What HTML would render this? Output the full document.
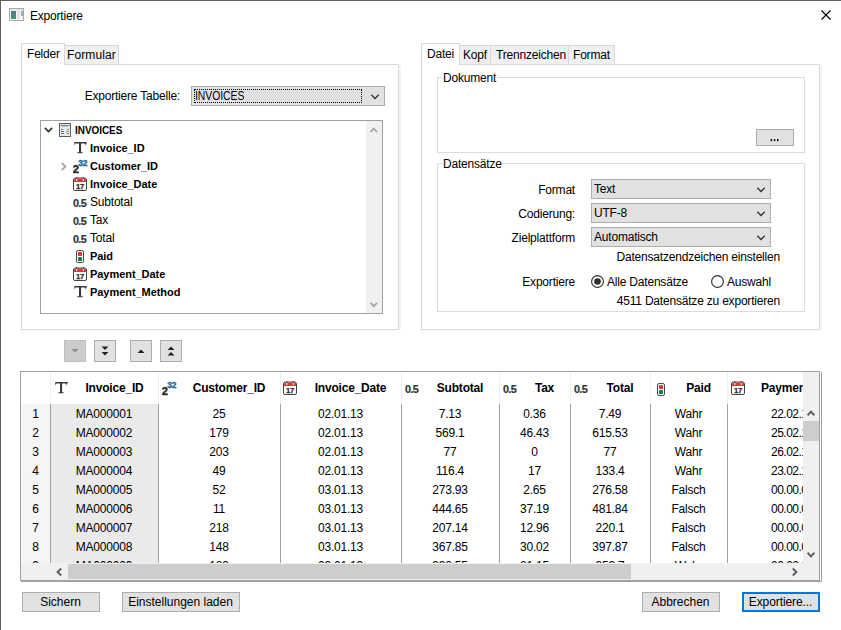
<!DOCTYPE html><html><head><meta charset="utf-8"><style>
html,body{margin:0;padding:0;}
body{width:841px;height:630px;overflow:hidden;position:relative;background:#fff;font-family:"Liberation Sans",sans-serif;font-size:12px;letter-spacing:-0.2px;color:#000;}
.t{position:absolute;line-height:14px;white-space:nowrap;}
.r{position:absolute;}
</style></head><body>
<div class="r" style="left:0px;top:0px;width:841px;height:1px;box-sizing:border-box;background:#5f5f5f;"></div>
<div class="r" style="left:0px;top:0px;width:1px;height:630px;box-sizing:border-box;background:#5f5f5f;"></div>
<svg class="r" style="left:9px;top:8px;" width="15" height="13" viewBox="0 0 15 13"><defs><linearGradient id="wg" x1="0" y1="0" x2="0" y2="1"><stop offset="0" stop-color="#55758c"/><stop offset="1" stop-color="#3f9a72"/></linearGradient></defs><rect x="0.5" y="0.5" width="14" height="12" fill="#f7f7f7" stroke="#a9a9a9"/><rect x="1" y="1" width="13" height="1.5" fill="#e2e2e2"/><rect x="2" y="3" width="5" height="8" fill="url(#wg)"/><rect x="8" y="3" width="3" height="8" fill="#e3e3e3"/><rect x="12" y="3" width="2" height="5" fill="#9fb5ac"/></svg>
<div class="t" style="left:30px;top:9px;">Exportiere</div>
<svg class="r" style="left:820px;top:9px;" width="12" height="12" viewBox="0 0 12 12"><path d="M1.5 1.5 L10.5 10.5 M10.5 1.5 L1.5 10.5" stroke="#000" stroke-width="1.1" fill="none"/></svg>
<div class="r" style="left:399px;top:65px;width:2px;height:265px;box-sizing:border-box;background:#f3f3f3;"></div>
<div class="r" style="left:21px;top:64px;width:378px;height:266px;box-sizing:border-box;border:1px solid #d9d9d9;"></div>
<div class="r" style="left:64px;top:45px;width:55px;height:20px;box-sizing:border-box;background:#f0f0f0;border:1px solid #d9d9d9;"></div>
<div class="r" style="left:21px;top:43px;width:44px;height:22px;box-sizing:border-box;background:#fff;border:1px solid #d9d9d9;border-bottom:none;"></div>
<div class="t" style="left:27px;top:47px;">Felder</div>
<div class="t" style="left:67px;top:48px;letter-spacing:0.1px;">Formular</div>
<div class="t" style="left:-20px;top:89px;width:200px;text-align:right;">Exportiere Tabelle:</div>
<div class="r" style="left:191px;top:86px;width:194px;height:20px;box-sizing:border-box;background:#e1e1e1;border:1px solid #adadad;"></div>
<div class="r" style="left:194px;top:89px;width:168px;height:14px;box-sizing:border-box;border:1px dotted #000;"></div>
<div class="t" style="left:195px;top:89px;letter-spacing:0;transform:scaleX(0.86);transform-origin:0 0;">INVOICES</div>
<svg class="r" style="left:370px;top:94px;" width="10" height="6" viewBox="0 0 10 6"><path d="M1.3 0.8 L5 4.5 L8.7 0.8" stroke="#333" stroke-width="1.3" fill="none"/></svg>
<div class="r" style="left:40px;top:120px;width:343px;height:194px;box-sizing:border-box;background:#fff;border:1px solid #a0a0a0;"></div>
<div class="r" style="left:366px;top:121px;width:16px;height:192px;box-sizing:border-box;background:#f0f0f0;"></div>
<svg class="r" style="left:369px;top:126px;" width="10" height="8" viewBox="0 0 10 8"><path d="M1.6 6 L4.8 2.6 L8 6" stroke="#a3a3a3" stroke-width="1.8" fill="none"/></svg>
<svg class="r" style="left:369px;top:301px;" width="10" height="8" viewBox="0 0 10 8"><path d="M1.6 1.8 L4.8 5.2 L8 1.8" stroke="#a3a3a3" stroke-width="1.8" fill="none"/></svg>
<svg class="r" style="left:44px;top:127px;" width="10" height="7" viewBox="0 0 10 7"><path d="M0.9 0.9 L4.5 4.6 L8.1 0.9" stroke="#333" stroke-width="1.7" fill="none"/></svg>
<svg class="r" style="left:59px;top:123px;" width="12" height="14" viewBox="0 0 12 14"><rect x="0.5" y="0.5" width="11" height="13" fill="#e4eaf0" stroke="#5e5e5e"/><path d="M1.8 3.4 L2.9 1.9 L4 3.4 L5.1 1.9 L6.2 3.4 L7.3 1.9 L8.4 3.4 L9.5 1.9 L10.3 3" stroke="#505a66" stroke-width="0.8" fill="none"/><rect x="2" y="6" width="2" height="1" fill="#667"/><rect x="8" y="6" width="2" height="1" fill="#6a8a6a"/><rect x="2" y="8" width="3" height="1" fill="#667"/><rect x="7" y="8" width="3" height="1" fill="#c98070"/><rect x="2" y="10" width="3" height="1" fill="#667"/><rect x="8" y="10" width="2" height="1" fill="#4f8f4f"/></svg>
<div class="t" style="left:75px;top:123px;font-weight:bold;font-size:11px;letter-spacing:0;transform:scaleX(0.9);transform-origin:0 0;">INVOICES</div>
<svg class="r" style="left:74px;top:142px;" width="13" height="12" viewBox="0 0 13 12"><path d="M0.3 0 H12.7 V1.6 H12.2 Q12 2.6 11.9 3.2 H11.6 Q11.4 1.7 10.6 1.6 H7.1 V9.9 Q7.2 10.3 8.8 10.4 V11.2 H3.2 V10.4 Q4.9 10.3 5 9.9 V1.6 H1.5 Q0.7 1.7 0.5 3.2 H0.2 Z" fill="#3c3c3c"/></svg>
<div class="t" style="left:90px;top:141px;font-weight:bold;font-size:11px;letter-spacing:-0.05px;">Invoice_ID</div>
<svg class="r" style="left:73px;top:159px;" width="16" height="15" viewBox="0 0 16 15"><text x="-0.2" y="14" font-family="Liberation Sans" font-weight="bold" font-size="11.2" fill="#2b2b2b" stroke="#2b2b2b" stroke-width="0.45">2</text><text x="5.3" y="7" font-family="Liberation Sans" font-weight="bold" font-size="8.4" fill="#1a6a98" stroke="#1a6a98" stroke-width="0.35" letter-spacing="-0.2">32</text></svg>
<div class="t" style="left:90px;top:159px;font-weight:bold;font-size:11px;letter-spacing:-0.05px;">Customer_ID</div>
<svg class="r" style="left:73px;top:177px;" width="14" height="14" viewBox="0 0 14 14"><path d="M0.5 3 Q0.5 1 2.5 1 H11.5 Q13.5 1 13.5 3 V12 Q13.5 13.5 12 13.5 H2 Q0.5 13.5 0.5 12 Z" fill="#fff" stroke="#444"/><path d="M1 3 Q1 1.5 2.5 1.5 H11.5 Q13 1.5 13 3 V5 H1 Z" fill="#d9383b"/><rect x="3" y="0" width="1.3" height="2" fill="#555"/><rect x="9.7" y="0" width="1.3" height="2" fill="#555"/><rect x="3" y="2" width="1.3" height="2" fill="#f6d6d6"/><rect x="9.7" y="2" width="1.3" height="2" fill="#f6d6d6"/><text x="7" y="12.2" text-anchor="middle" font-family="Liberation Sans" font-weight="bold" font-size="7.6" fill="#2b2b2b" stroke="#2b2b2b" stroke-width="0.25" letter-spacing="-0.3">17</text></svg>
<div class="t" style="left:90px;top:177px;font-weight:bold;font-size:11px;letter-spacing:-0.05px;">Invoice_Date</div>
<svg class="r" style="left:73px;top:199px;" width="16" height="10" viewBox="0 0 16 10"><text x="-0.1" y="8" font-family="Liberation Sans" font-weight="bold" font-size="10.8" fill="#333" stroke="#333" stroke-width="0.2" letter-spacing="-0.6">0.5</text></svg>
<div class="t" style="left:90px;top:195px;">Subtotal</div>
<svg class="r" style="left:73px;top:217px;" width="16" height="10" viewBox="0 0 16 10"><text x="-0.1" y="8" font-family="Liberation Sans" font-weight="bold" font-size="10.8" fill="#333" stroke="#333" stroke-width="0.2" letter-spacing="-0.6">0.5</text></svg>
<div class="t" style="left:90px;top:213px;">Tax</div>
<svg class="r" style="left:73px;top:235px;" width="16" height="10" viewBox="0 0 16 10"><text x="-0.1" y="8" font-family="Liberation Sans" font-weight="bold" font-size="10.8" fill="#333" stroke="#333" stroke-width="0.2" letter-spacing="-0.6">0.5</text></svg>
<div class="t" style="left:90px;top:231px;">Total</div>
<svg class="r" style="left:76px;top:250px;" width="8" height="13" viewBox="0 0 8 13"><rect x="0.5" y="0.5" width="7" height="12" rx="1.6" fill="#fff" stroke="#444"/><rect x="2" y="2" width="4" height="4" rx="0.6" fill="#e5343a"/><rect x="2" y="7" width="4" height="4" rx="0.6" fill="#13803a"/></svg>
<div class="t" style="left:90px;top:249px;font-weight:bold;font-size:11px;letter-spacing:-0.05px;">Paid</div>
<svg class="r" style="left:73px;top:267px;" width="14" height="14" viewBox="0 0 14 14"><path d="M0.5 3 Q0.5 1 2.5 1 H11.5 Q13.5 1 13.5 3 V12 Q13.5 13.5 12 13.5 H2 Q0.5 13.5 0.5 12 Z" fill="#fff" stroke="#444"/><path d="M1 3 Q1 1.5 2.5 1.5 H11.5 Q13 1.5 13 3 V5 H1 Z" fill="#d9383b"/><rect x="3" y="0" width="1.3" height="2" fill="#555"/><rect x="9.7" y="0" width="1.3" height="2" fill="#555"/><rect x="3" y="2" width="1.3" height="2" fill="#f6d6d6"/><rect x="9.7" y="2" width="1.3" height="2" fill="#f6d6d6"/><text x="7" y="12.2" text-anchor="middle" font-family="Liberation Sans" font-weight="bold" font-size="7.6" fill="#2b2b2b" stroke="#2b2b2b" stroke-width="0.25" letter-spacing="-0.3">17</text></svg>
<div class="t" style="left:90px;top:267px;font-weight:bold;font-size:11px;letter-spacing:-0.05px;">Payment_Date</div>
<svg class="r" style="left:74px;top:286px;" width="13" height="12" viewBox="0 0 13 12"><path d="M0.3 0 H12.7 V1.6 H12.2 Q12 2.6 11.9 3.2 H11.6 Q11.4 1.7 10.6 1.6 H7.1 V9.9 Q7.2 10.3 8.8 10.4 V11.2 H3.2 V10.4 Q4.9 10.3 5 9.9 V1.6 H1.5 Q0.7 1.7 0.5 3.2 H0.2 Z" fill="#3c3c3c"/></svg>
<div class="t" style="left:90px;top:285px;font-weight:bold;font-size:11px;letter-spacing:-0.05px;">Payment_Method</div>
<svg class="r" style="left:60px;top:162px;" width="8" height="10" viewBox="0 0 8 10"><path d="M1.8 1 L5.4 4.6 L1.8 8.2" stroke="#a6a6a6" stroke-width="1.8" fill="none"/></svg>
<div class="r" style="left:820px;top:65px;width:2px;height:265px;box-sizing:border-box;background:#f3f3f3;"></div>
<div class="r" style="left:421px;top:64px;width:399px;height:266px;box-sizing:border-box;border:1px solid #d9d9d9;"></div>
<div class="r" style="left:459px;top:45px;width:32px;height:20px;box-sizing:border-box;background:#f0f0f0;border:1px solid #d9d9d9;"></div>
<div class="r" style="left:490px;top:45px;width:79px;height:20px;box-sizing:border-box;background:#f0f0f0;border:1px solid #d9d9d9;"></div>
<div class="r" style="left:568px;top:45px;width:47px;height:20px;box-sizing:border-box;background:#f0f0f0;border:1px solid #d9d9d9;"></div>
<div class="r" style="left:421px;top:43px;width:39px;height:22px;box-sizing:border-box;background:#fff;border:1px solid #d9d9d9;border-bottom:none;"></div>
<div class="t" style="left:427px;top:47px;">Datei</div>
<div class="t" style="left:463px;top:48px;">Kopf</div>
<div class="t" style="left:496px;top:48px;">Trennzeichen</div>
<div class="t" style="left:573px;top:48px;">Format</div>
<div class="r" style="left:437px;top:77px;width:368px;height:76px;box-sizing:border-box;border:1px solid #dcdcdc;"></div>
<div class="r" style="left:442px;top:70px;width:55px;height:13px;box-sizing:border-box;background:#fff;"></div>
<div class="t" style="left:443px;top:71px;">Dokument</div>
<div class="r" style="left:756px;top:129px;width:38px;height:17px;box-sizing:border-box;background:#e1e1e1;border:1px solid #adadad;"></div>
<svg class="r" style="left:770px;top:138px;" width="10" height="5" viewBox="0 0 10 5"><rect x="0.6" y="1" width="1.5" height="2.2" fill="#111"/><rect x="3.8" y="1" width="1.5" height="2.2" fill="#111"/><rect x="7" y="1" width="1.5" height="2.2" fill="#111"/></svg>
<div class="r" style="left:437px;top:163px;width:368px;height:149px;box-sizing:border-box;border:1px solid #dcdcdc;"></div>
<div class="r" style="left:442px;top:156px;width:58px;height:13px;box-sizing:border-box;background:#fff;"></div>
<div class="t" style="left:443px;top:157px;">Datensätze</div>
<div class="t" style="left:375px;top:183px;width:200px;text-align:right;">Format</div>
<div class="r" style="left:591px;top:179px;width:180px;height:20px;box-sizing:border-box;background:#e1e1e1;border:1px solid #adadad;"></div>
<div class="t" style="left:594px;top:182px;">Text</div>
<svg class="r" style="left:756px;top:187px;" width="10" height="6" viewBox="0 0 10 6"><path d="M1.3 0.8 L5 4.5 L8.7 0.8" stroke="#333" stroke-width="1.3" fill="none"/></svg>
<div class="t" style="left:375px;top:207px;width:200px;text-align:right;">Codierung:</div>
<div class="r" style="left:591px;top:203px;width:180px;height:20px;box-sizing:border-box;background:#e1e1e1;border:1px solid #adadad;"></div>
<div class="t" style="left:594px;top:206px;">UTF-8</div>
<svg class="r" style="left:756px;top:211px;" width="10" height="6" viewBox="0 0 10 6"><path d="M1.3 0.8 L5 4.5 L8.7 0.8" stroke="#333" stroke-width="1.3" fill="none"/></svg>
<div class="t" style="left:375px;top:231px;width:200px;text-align:right;">Zielplattform</div>
<div class="r" style="left:591px;top:227px;width:180px;height:20px;box-sizing:border-box;background:#e1e1e1;border:1px solid #adadad;"></div>
<div class="t" style="left:594px;top:230px;">Automatisch</div>
<svg class="r" style="left:756px;top:235px;" width="10" height="6" viewBox="0 0 10 6"><path d="M1.3 0.8 L5 4.5 L8.7 0.8" stroke="#333" stroke-width="1.3" fill="none"/></svg>
<div class="t" style="left:580px;top:250px;width:200px;text-align:right;">Datensatzendzeichen einstellen</div>
<div class="t" style="left:375px;top:275px;width:200px;text-align:right;">Exportiere</div>
<svg class="r" style="left:590px;top:274px;" width="15" height="15" viewBox="0 0 15 15"><circle cx="7.5" cy="7.5" r="5.9" fill="#fff" stroke="#333" stroke-width="1.2"/><circle cx="7.5" cy="7.5" r="3.3" fill="#2f2f2f"/></svg>
<div class="t" style="left:607px;top:275px;">Alle Datensätze</div>
<svg class="r" style="left:710px;top:274px;" width="15" height="15" viewBox="0 0 15 15"><circle cx="7.5" cy="7.5" r="5.9" fill="#fff" stroke="#333" stroke-width="1.2"/></svg>
<div class="t" style="left:727px;top:275px;">Auswahl</div>
<div class="t" style="left:580px;top:294px;width:200px;text-align:right;">4511 Datensätze zu exportieren</div>
<div class="r" style="left:64px;top:340px;width:22px;height:22px;box-sizing:border-box;background:#cccccc;border:1px solid #bfbfbf;"></div>
<div class="r" style="left:94px;top:340px;width:22px;height:22px;box-sizing:border-box;background:#e1e1e1;border:1px solid #adadad;"></div>
<div class="r" style="left:130px;top:340px;width:22px;height:22px;box-sizing:border-box;background:#e1e1e1;border:1px solid #adadad;"></div>
<div class="r" style="left:160px;top:340px;width:22px;height:22px;box-sizing:border-box;background:#e1e1e1;border:1px solid #adadad;"></div>
<svg class="r" style="left:60px;top:336px;" width="130" height="30" viewBox="0 0 130 30"><polygon points="11.5,13 18.5,13 15,16.5" fill="#8f8f8f"/><polygon points="41.5,10.5 48.5,10.5 45,14" fill="#222"/><polygon points="41.5,16 48.5,16 45,19.5" fill="#222"/><polygon points="77.5,17 84.5,17 81,13.5" fill="#222"/><polygon points="107.5,14 114.5,14 111,10.5" fill="#222"/><polygon points="107.5,19.5 114.5,19.5 111,16" fill="#222"/></svg>
<div class="r" style="left:20px;top:371px;width:800px;height:210px;box-sizing:border-box;background:#fff;border:1px solid #a0a0a0;"></div>
<div class="r" style="left:821px;top:372px;width:1px;height:210px;box-sizing:border-box;background:#a0a0a0;"></div>
<div class="r" style="left:21px;top:581px;width:801px;height:1px;box-sizing:border-box;background:#a0a0a0;"></div>
<div class="r" style="left:21px;top:404px;width:29px;height:159px;box-sizing:border-box;background:#f5f5f5;"></div>
<div class="r" style="left:51px;top:404px;width:107px;height:159px;box-sizing:border-box;background:#eaeaea;"></div>
<div class="r" style="left:50px;top:372px;width:1px;height:32px;box-sizing:border-box;background:#efefef;"></div>
<div class="r" style="left:50px;top:404px;width:1px;height:159px;box-sizing:border-box;background:#a0a0a0;"></div>
<div class="r" style="left:158px;top:372px;width:1px;height:32px;box-sizing:border-box;background:#efefef;"></div>
<div class="r" style="left:158px;top:404px;width:1px;height:159px;box-sizing:border-box;background:#a0a0a0;"></div>
<div class="r" style="left:280px;top:372px;width:1px;height:32px;box-sizing:border-box;background:#efefef;"></div>
<div class="r" style="left:280px;top:404px;width:1px;height:159px;box-sizing:border-box;background:#a0a0a0;"></div>
<div class="r" style="left:401px;top:372px;width:1px;height:32px;box-sizing:border-box;background:#efefef;"></div>
<div class="r" style="left:401px;top:404px;width:1px;height:159px;box-sizing:border-box;background:#a0a0a0;"></div>
<div class="r" style="left:499px;top:372px;width:1px;height:32px;box-sizing:border-box;background:#efefef;"></div>
<div class="r" style="left:499px;top:404px;width:1px;height:159px;box-sizing:border-box;background:#a0a0a0;"></div>
<div class="r" style="left:570px;top:372px;width:1px;height:32px;box-sizing:border-box;background:#efefef;"></div>
<div class="r" style="left:570px;top:404px;width:1px;height:159px;box-sizing:border-box;background:#a0a0a0;"></div>
<div class="r" style="left:650px;top:372px;width:1px;height:32px;box-sizing:border-box;background:#efefef;"></div>
<div class="r" style="left:650px;top:404px;width:1px;height:159px;box-sizing:border-box;background:#a0a0a0;"></div>
<div class="r" style="left:727px;top:372px;width:1px;height:32px;box-sizing:border-box;background:#efefef;"></div>
<div class="r" style="left:727px;top:404px;width:1px;height:159px;box-sizing:border-box;background:#a0a0a0;"></div>
<svg class="r" style="left:55px;top:382px;" width="13" height="12" viewBox="0 0 13 12"><path d="M0.3 0 H12.7 V1.6 H12.2 Q12 2.6 11.9 3.2 H11.6 Q11.4 1.7 10.6 1.6 H7.1 V9.9 Q7.2 10.3 8.8 10.4 V11.2 H3.2 V10.4 Q4.9 10.3 5 9.9 V1.6 H1.5 Q0.7 1.7 0.5 3.2 H0.2 Z" fill="#3c3c3c"/></svg>
<div class="t" style="left:14.5px;top:381px;width:200px;text-align:center;font-weight:bold;">Invoice_ID</div>
<svg class="r" style="left:162px;top:381px;" width="16" height="15" viewBox="0 0 16 15"><text x="-0.2" y="14" font-family="Liberation Sans" font-weight="bold" font-size="11.2" fill="#2b2b2b" stroke="#2b2b2b" stroke-width="0.45">2</text><text x="5.3" y="7" font-family="Liberation Sans" font-weight="bold" font-size="8.4" fill="#1a6a98" stroke="#1a6a98" stroke-width="0.35" letter-spacing="-0.2">32</text></svg>
<div class="t" style="left:129.0px;top:381px;width:200px;text-align:center;font-weight:bold;">Customer_ID</div>
<svg class="r" style="left:283px;top:381px;" width="14" height="14" viewBox="0 0 14 14"><path d="M0.5 3 Q0.5 1 2.5 1 H11.5 Q13.5 1 13.5 3 V12 Q13.5 13.5 12 13.5 H2 Q0.5 13.5 0.5 12 Z" fill="#fff" stroke="#444"/><path d="M1 3 Q1 1.5 2.5 1.5 H11.5 Q13 1.5 13 3 V5 H1 Z" fill="#d9383b"/><rect x="3" y="0" width="1.3" height="2" fill="#555"/><rect x="9.7" y="0" width="1.3" height="2" fill="#555"/><rect x="3" y="2" width="1.3" height="2" fill="#f6d6d6"/><rect x="9.7" y="2" width="1.3" height="2" fill="#f6d6d6"/><text x="7" y="12.2" text-anchor="middle" font-family="Liberation Sans" font-weight="bold" font-size="7.6" fill="#2b2b2b" stroke="#2b2b2b" stroke-width="0.25" letter-spacing="-0.3">17</text></svg>
<div class="t" style="left:250.5px;top:381px;width:200px;text-align:center;font-weight:bold;">Invoice_Date</div>
<svg class="r" style="left:405px;top:385px;" width="16" height="10" viewBox="0 0 16 10"><text x="-0.1" y="8" font-family="Liberation Sans" font-weight="bold" font-size="10.8" fill="#333" stroke="#333" stroke-width="0.2" letter-spacing="-0.6">0.5</text></svg>
<div class="t" style="left:360.0px;top:381px;width:200px;text-align:center;font-weight:bold;">Subtotal</div>
<svg class="r" style="left:503px;top:385px;" width="16" height="10" viewBox="0 0 16 10"><text x="-0.1" y="8" font-family="Liberation Sans" font-weight="bold" font-size="10.8" fill="#333" stroke="#333" stroke-width="0.2" letter-spacing="-0.6">0.5</text></svg>
<div class="t" style="left:444.5px;top:381px;width:200px;text-align:center;font-weight:bold;">Tax</div>
<svg class="r" style="left:574px;top:385px;" width="16" height="10" viewBox="0 0 16 10"><text x="-0.1" y="8" font-family="Liberation Sans" font-weight="bold" font-size="10.8" fill="#333" stroke="#333" stroke-width="0.2" letter-spacing="-0.6">0.5</text></svg>
<div class="t" style="left:520.0px;top:381px;width:200px;text-align:center;font-weight:bold;">Total</div>
<svg class="r" style="left:657px;top:383px;" width="8" height="13" viewBox="0 0 8 13"><rect x="0.5" y="0.5" width="7" height="12" rx="1.6" fill="#fff" stroke="#444"/><rect x="2" y="2" width="4" height="4" rx="0.6" fill="#e5343a"/><rect x="2" y="7" width="4" height="4" rx="0.6" fill="#13803a"/></svg>
<div class="t" style="left:598.5px;top:381px;width:200px;text-align:center;font-weight:bold;">Paid</div>
<svg class="r" style="left:731px;top:381px;" width="14" height="14" viewBox="0 0 14 14"><path d="M0.5 3 Q0.5 1 2.5 1 H11.5 Q13.5 1 13.5 3 V12 Q13.5 13.5 12 13.5 H2 Q0.5 13.5 0.5 12 Z" fill="#fff" stroke="#444"/><path d="M1 3 Q1 1.5 2.5 1.5 H11.5 Q13 1.5 13 3 V5 H1 Z" fill="#d9383b"/><rect x="3" y="0" width="1.3" height="2" fill="#555"/><rect x="9.7" y="0" width="1.3" height="2" fill="#555"/><rect x="3" y="2" width="1.3" height="2" fill="#f6d6d6"/><rect x="9.7" y="2" width="1.3" height="2" fill="#f6d6d6"/><text x="7" y="12.2" text-anchor="middle" font-family="Liberation Sans" font-weight="bold" font-size="7.6" fill="#2b2b2b" stroke="#2b2b2b" stroke-width="0.25" letter-spacing="-0.3">17</text></svg>
<div class="r" style="left:728px;top:372px;width:75px;height:31px;overflow:hidden;"><div class="t" style="left:33px;top:9px;font-weight:bold;">Payment_Date</div></div>
<div class="r" style="left:21px;top:404px;width:782px;height:159px;overflow:hidden;">
<div class="t" style="left:0px;width:29px;top:3px;text-align:center;">1</div>
<div class="t" style="left:29px;width:108px;top:3px;text-align:center;">MA000001</div>
<div class="t" style="left:137px;width:122px;top:3px;text-align:center;">25</div>
<div class="t" style="left:259px;width:121px;top:3px;text-align:center;">02.01.13</div>
<div class="t" style="left:380px;width:98px;top:3px;text-align:center;">7.13</div>
<div class="t" style="left:478px;width:71px;top:3px;text-align:center;">0.36</div>
<div class="t" style="left:549px;width:80px;top:3px;text-align:center;">7.49</div>
<div class="t" style="left:629px;width:77px;top:3px;text-align:center;">Wahr</div>
<div class="t" style="left:750px;top:3px;letter-spacing:-0.5px;">22.02.13</div>
<div class="t" style="left:0px;width:29px;top:22px;text-align:center;">2</div>
<div class="t" style="left:29px;width:108px;top:22px;text-align:center;">MA000002</div>
<div class="t" style="left:137px;width:122px;top:22px;text-align:center;">179</div>
<div class="t" style="left:259px;width:121px;top:22px;text-align:center;">02.01.13</div>
<div class="t" style="left:380px;width:98px;top:22px;text-align:center;">569.1</div>
<div class="t" style="left:478px;width:71px;top:22px;text-align:center;">46.43</div>
<div class="t" style="left:549px;width:80px;top:22px;text-align:center;">615.53</div>
<div class="t" style="left:629px;width:77px;top:22px;text-align:center;">Wahr</div>
<div class="t" style="left:750px;top:22px;letter-spacing:-0.5px;">25.02.13</div>
<div class="t" style="left:0px;width:29px;top:41px;text-align:center;">3</div>
<div class="t" style="left:29px;width:108px;top:41px;text-align:center;">MA000003</div>
<div class="t" style="left:137px;width:122px;top:41px;text-align:center;">203</div>
<div class="t" style="left:259px;width:121px;top:41px;text-align:center;">02.01.13</div>
<div class="t" style="left:380px;width:98px;top:41px;text-align:center;">77</div>
<div class="t" style="left:478px;width:71px;top:41px;text-align:center;">0</div>
<div class="t" style="left:549px;width:80px;top:41px;text-align:center;">77</div>
<div class="t" style="left:629px;width:77px;top:41px;text-align:center;">Wahr</div>
<div class="t" style="left:750px;top:41px;letter-spacing:-0.5px;">26.02.13</div>
<div class="t" style="left:0px;width:29px;top:60px;text-align:center;">4</div>
<div class="t" style="left:29px;width:108px;top:60px;text-align:center;">MA000004</div>
<div class="t" style="left:137px;width:122px;top:60px;text-align:center;">49</div>
<div class="t" style="left:259px;width:121px;top:60px;text-align:center;">02.01.13</div>
<div class="t" style="left:380px;width:98px;top:60px;text-align:center;">116.4</div>
<div class="t" style="left:478px;width:71px;top:60px;text-align:center;">17</div>
<div class="t" style="left:549px;width:80px;top:60px;text-align:center;">133.4</div>
<div class="t" style="left:629px;width:77px;top:60px;text-align:center;">Wahr</div>
<div class="t" style="left:750px;top:60px;letter-spacing:-0.5px;">23.02.13</div>
<div class="t" style="left:0px;width:29px;top:79px;text-align:center;">5</div>
<div class="t" style="left:29px;width:108px;top:79px;text-align:center;">MA000005</div>
<div class="t" style="left:137px;width:122px;top:79px;text-align:center;">52</div>
<div class="t" style="left:259px;width:121px;top:79px;text-align:center;">03.01.13</div>
<div class="t" style="left:380px;width:98px;top:79px;text-align:center;">273.93</div>
<div class="t" style="left:478px;width:71px;top:79px;text-align:center;">2.65</div>
<div class="t" style="left:549px;width:80px;top:79px;text-align:center;">276.58</div>
<div class="t" style="left:629px;width:77px;top:79px;text-align:center;">Falsch</div>
<div class="t" style="left:750px;top:79px;letter-spacing:-0.5px;">00.00.00</div>
<div class="t" style="left:0px;width:29px;top:98px;text-align:center;">6</div>
<div class="t" style="left:29px;width:108px;top:98px;text-align:center;">MA000006</div>
<div class="t" style="left:137px;width:122px;top:98px;text-align:center;">11</div>
<div class="t" style="left:259px;width:121px;top:98px;text-align:center;">03.01.13</div>
<div class="t" style="left:380px;width:98px;top:98px;text-align:center;">444.65</div>
<div class="t" style="left:478px;width:71px;top:98px;text-align:center;">37.19</div>
<div class="t" style="left:549px;width:80px;top:98px;text-align:center;">481.84</div>
<div class="t" style="left:629px;width:77px;top:98px;text-align:center;">Falsch</div>
<div class="t" style="left:750px;top:98px;letter-spacing:-0.5px;">00.00.00</div>
<div class="t" style="left:0px;width:29px;top:117px;text-align:center;">7</div>
<div class="t" style="left:29px;width:108px;top:117px;text-align:center;">MA000007</div>
<div class="t" style="left:137px;width:122px;top:117px;text-align:center;">218</div>
<div class="t" style="left:259px;width:121px;top:117px;text-align:center;">03.01.13</div>
<div class="t" style="left:380px;width:98px;top:117px;text-align:center;">207.14</div>
<div class="t" style="left:478px;width:71px;top:117px;text-align:center;">12.96</div>
<div class="t" style="left:549px;width:80px;top:117px;text-align:center;">220.1</div>
<div class="t" style="left:629px;width:77px;top:117px;text-align:center;">Falsch</div>
<div class="t" style="left:750px;top:117px;letter-spacing:-0.5px;">00.00.00</div>
<div class="t" style="left:0px;width:29px;top:136px;text-align:center;">8</div>
<div class="t" style="left:29px;width:108px;top:136px;text-align:center;">MA000008</div>
<div class="t" style="left:137px;width:122px;top:136px;text-align:center;">148</div>
<div class="t" style="left:259px;width:121px;top:136px;text-align:center;">03.01.13</div>
<div class="t" style="left:380px;width:98px;top:136px;text-align:center;">367.85</div>
<div class="t" style="left:478px;width:71px;top:136px;text-align:center;">30.02</div>
<div class="t" style="left:549px;width:80px;top:136px;text-align:center;">397.87</div>
<div class="t" style="left:629px;width:77px;top:136px;text-align:center;">Falsch</div>
<div class="t" style="left:750px;top:136px;letter-spacing:-0.5px;">00.00.00</div>
<div class="t" style="left:0px;width:29px;top:155px;text-align:center;">9</div>
<div class="t" style="left:29px;width:108px;top:155px;text-align:center;">MA000009</div>
<div class="t" style="left:137px;width:122px;top:155px;text-align:center;">183</div>
<div class="t" style="left:259px;width:121px;top:155px;text-align:center;">03.01.13</div>
<div class="t" style="left:380px;width:98px;top:155px;text-align:center;">332.55</div>
<div class="t" style="left:478px;width:71px;top:155px;text-align:center;">21.15</div>
<div class="t" style="left:549px;width:80px;top:155px;text-align:center;">353.7</div>
<div class="t" style="left:629px;width:77px;top:155px;text-align:center;">Wahr</div>
<div class="t" style="left:750px;top:155px;letter-spacing:-0.5px;">00.02.13</div>
</div>
<div class="r" style="left:803px;top:372px;width:16px;height:208px;box-sizing:border-box;background:#f0f0f0;"></div>
<svg class="r" style="left:806px;top:409px;" width="10" height="8" viewBox="0 0 10 8"><path d="M1.6 6.2 L5 2.6 L8.4 6.2" stroke="#606060" stroke-width="2" fill="none"/></svg>
<div class="r" style="left:803px;top:421px;width:16px;height:20px;box-sizing:border-box;background:#cdcdcd;"></div>
<svg class="r" style="left:806px;top:551px;" width="10" height="8" viewBox="0 0 10 8"><path d="M1.6 1.8 L5 5.4 L8.4 1.8" stroke="#606060" stroke-width="2" fill="none"/></svg>
<div class="r" style="left:21px;top:563px;width:782px;height:17px;box-sizing:border-box;background:#f0f0f0;"></div>
<svg class="r" style="left:55px;top:567px;" width="8" height="10" viewBox="0 0 8 10"><path d="M6.2 1.6 L2.6 5 L6.2 8.4" stroke="#606060" stroke-width="2" fill="none"/></svg>
<div class="r" style="left:68px;top:564px;width:563px;height:15px;box-sizing:border-box;background:#cdcdcd;"></div>
<svg class="r" style="left:791px;top:567px;" width="8" height="10" viewBox="0 0 8 10"><path d="M1.8 1.6 L5.4 5 L1.8 8.4" stroke="#606060" stroke-width="2" fill="none"/></svg>
<div class="r" style="left:22px;top:592px;width:78px;height:20px;box-sizing:border-box;background:#e1e1e1;border:1px solid #adadad;"></div>
<div class="t" style="left:-39.5px;top:595px;width:200px;text-align:center;letter-spacing:0;">Sichern</div>
<div class="r" style="left:122px;top:592px;width:118px;height:20px;box-sizing:border-box;background:#e1e1e1;border:1px solid #adadad;"></div>
<div class="t" style="left:80.5px;top:595px;width:200px;text-align:center;letter-spacing:0;">Einstellungen laden</div>
<div class="r" style="left:642px;top:592px;width:78px;height:20px;box-sizing:border-box;background:#e1e1e1;border:1px solid #adadad;"></div>
<div class="t" style="left:580.5px;top:595px;width:200px;text-align:center;letter-spacing:0;">Abbrechen</div>
<div class="r" style="left:742px;top:592px;width:78px;height:20px;box-sizing:border-box;background:#e1e1e1;border:2px solid #0078d7;"></div>
<div class="t" style="left:680.5px;top:595px;width:200px;text-align:center;letter-spacing:-0.1px;">Exportiere...</div>
</body></html>
